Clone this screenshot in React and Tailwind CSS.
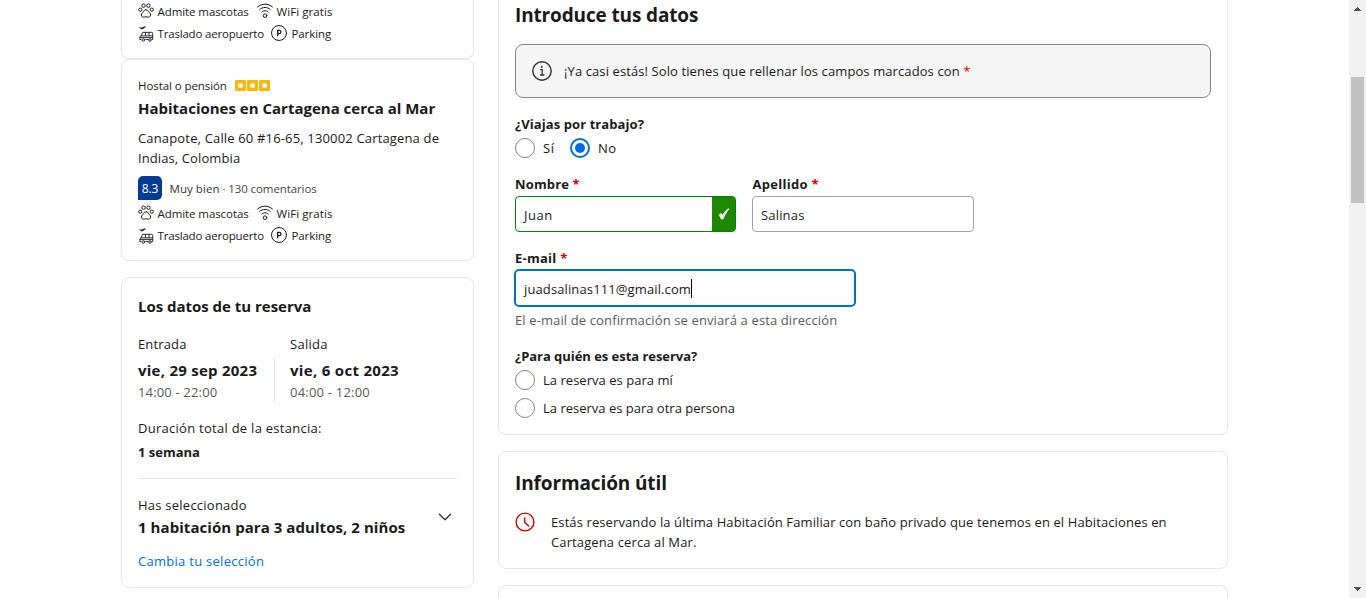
function PawIcon() {
  return (
    <svg viewBox="0 0 24 24" className="h-4 w-4" fill="none" stroke="currentColor" strokeWidth="1.5">
      <circle cx="8.3" cy="4" r="2.6" />
      <circle cx="15.7" cy="4" r="2.6" />
      <circle cx="3.4" cy="10" r="2.4" />
      <circle cx="20.6" cy="10" r="2.4" />
      <path d="M12 10.2c-2.3 0-3.4 1.6-4.2 3.1-.9 1.5-2.7 2.3-2.7 4.700 0 2 1.4 3.300 3.2 3.300 1.500 0 2.300-.7 3.700-.7s2.200.7 3.700.7c1.800 0 3.200-1.300 3.200-3.300 0-2.400-1.800-3.200-2.700-4.700-.8-1.500-1.900-3.100-4.200-3.100z" />
    </svg>
  );
}

function WifiIcon() {
  return (
    <svg viewBox="0 0 24 24" className="h-4 w-4" fill="none" stroke="currentColor" strokeWidth="1.5" strokeLinecap="round">
      <path d="M.8 6C7 .2 17 .2 23.200 6" />
      <path d="M4 9.800c4.400-4.300 11.600-4.300 16 0" />
      <path d="M7.200 13.500c2.700-2.600 6.900-2.600 9.600 0" />
      <circle cx="12" cy="19" r="2.700" />
    </svg>
  );
}

function ShuttleIcon() {
  return (
    <svg viewBox="0 0 24 24" className="h-4 w-4" fill="none" stroke="currentColor" strokeWidth="1.4" strokeLinejoin="round">
      <path d="M2 1.600l2.500 1.400L10 .9l1.500.3-3 2.400-3.700 1.200z" fill="currentColor" strokeWidth="0.5" />
      <path d="M4.800 20.300H2.700v-3.300c0-1.200.8-2 2-2.200l2.200-5.300h13.600c.9 0 1.600.7 1.600 1.600v9.200h-1.800M15.900 20.300h-4.800" />
      <path d="M4.700 14.800h17.400M11.200 9.500v5.300M16.500 9.500v5.300M2.700 17.400h19.400" />
      <circle cx="8" cy="21" r="1.900" />
      <circle cx="18" cy="21" r="1.900" />
    </svg>
  );
}

function ParkingIcon() {
  return (
    <svg viewBox="0 0 24 24" className="h-4 w-4" fill="none" stroke="currentColor">
      <circle cx="12" cy="12" r="11.200" strokeWidth="1.500" />
      <path d="M10 16.800V7.900h2.400a2.500 2.500 0 0 1 0 5H10" strokeWidth="1.900" />
    </svg>
  );
}

function Facilities() {
  return (
    <div className="text-[11.5px] leading-[22px]">
      <div className="flex h-[22px]">
        <span className="mt-[2px] mr-[3.5px]"><PawIcon /></span>
        <span className="w-[99.500px] tracking-[-0.08px]">Admite mascotas</span>
        <span className="mt-[2px] mr-[3.5px]"><WifiIcon /></span>
        <span className="tracking-[0.08px]">WiFi gratis</span>
      </div>
      <div className="flex h-[22px]">
        <span className="mt-[3px] mr-[3.5px]"><ShuttleIcon /></span>
        <span className="w-[113.500px] tracking-[-0.18px]">Traslado aeropuerto</span>
        <span className="mt-[2px] mr-[4.5px]"><ParkingIcon /></span>
        <span className="tracking-[-0.1px]">Parking</span>
      </div>
    </div>
  );
}

function Radio({ checked }) {
  return checked ? (
    <span className="flex h-5 w-5 items-center justify-center rounded-full border-2 border-[#006ce4]">
      <span className="h-[10px] w-[10px] rounded-full bg-[#006ce4]" />
    </span>
  ) : (
    <span className="h-5 w-5 rounded-full border border-[#868686]" />
  );
}

const Req = () => <span className="text-[#c00]">*</span>;

function RatingSquare() {
  return (
    <span className="flex h-[11px] w-[11px] items-center justify-center rounded-[1px] bg-[#ffb700]">
      <span className="h-[5px] w-[5px] rounded-full bg-white" />
    </span>
  );
}

function Sidebar() {
  return (
    <aside className="flex w-[353px] flex-col">
      <section className="h-[59px] rounded-b-lg border border-t-0 border-[#e7e7e7] px-4 pt-[1px]">
        <Facilities />
      </section>

      <section className="h-[202px] rounded-lg border border-[#e7e7e7] px-4 pt-4">
        <div className="flex h-5 items-center">
          <span className="w-[97px] text-[11.5px] tracking-[-0.08px]">Hostal o pensión</span>
          <span className="flex gap-px pb-[2px]">
            <RatingSquare /><RatingSquare /><RatingSquare />
          </span>
        </div>
        <h3 className="text-[15px] leading-6 font-bold">Habitaciones en Cartagena cerca al Mar</h3>
        <p className="mt-2 leading-5 whitespace-nowrap">
          <span className="tracking-[0.16px]">Canapote, Calle 60 #16-65, 130002 Cartagena de</span>
          <br />
          <span className="tracking-[0.1px]">Indias, Colombia</span>
        </p>
        <div className="mt-2 flex h-6 items-center">
          <span className="flex h-6 w-6 items-center justify-center rounded-[5px] rounded-bl-none bg-[#003b95] pt-px text-xs font-medium tracking-[-0.2px] text-white">8.3</span>
          <span className="ml-[7.500px] w-[53px] pt-[2px] text-[11.5px] tracking-[0.05px] text-[#333]">Muy bien</span>
          <span className="pt-[2px] text-[11.5px] tracking-[-0.1px] text-[#474747]">· 130 comentarios</span>
        </div>
        <div className="mt-[3px]"><Facilities /></div>
      </section>

      <section className="mt-4 h-[311px] rounded-lg border border-[#e7e7e7] px-4 pt-4">
        <h3 className="text-[15px] leading-6 font-bold tracking-[-0.02px]">Los datos de tu reserva</h3>
        <div className="mt-4 flex">
          <div className="w-[136px]">
            <div className="leading-5 font-medium tracking-[0.15px]">Entrada</div>
            <div className="mt-1 text-[15px] leading-6 font-bold tracking-[0.25px]">vie, 29 sep 2023</div>
            <div className="leading-5 tracking-[0.16px] text-[#595959]">14:00 - 22:00</div>
          </div>
          <div className="mt-6 h-11 w-px bg-[#e7e7e7]" />
          <div className="ml-[15px]">
            <div className="leading-5 font-medium tracking-[0.28px]">Salida</div>
            <div className="mt-1 text-[15px] leading-6 font-bold tracking-[0.31px]">vie, 6 oct 2023</div>
            <div className="leading-5 tracking-[0.21px] text-[#595959]">04:00 - 12:00</div>
          </div>
        </div>
        <div className="mt-4 leading-5 font-medium tracking-[0.27px]">Duración total de la estancia:</div>
        <div className="mt-1 leading-5 font-bold">1 semana</div>
        <div className="mt-4 flex justify-between border-t border-[#e7e7e7] pt-4">
          <div>
            <div className="leading-5 font-medium tracking-[0.24px]">Has seleccionado</div>
            <div className="text-[15px] leading-6 font-bold tracking-[0.06px]">1 habitación para 3 adultos, 2 niños</div>
          </div>
          <svg viewBox="0 0 14 8" className="mt-[18px] mr-[5px] h-2 w-[14px]" fill="none" stroke="#333" strokeWidth="1.4" strokeLinecap="round" strokeLinejoin="round">
            <path d="M1.400 1.200L7 6.800l5.600-5.600" />
          </svg>
        </div>
        <a className="mt-3 block leading-5 font-medium tracking-[0.28px] text-[#006ce4]">Cambia tu selección</a>
      </section>
    </aside>
  );
}

function DetailsForm() {
  return (
    <section className="h-[435px] rounded-b-lg border border-t-0 border-[#e7e7e7] px-4">
      <h2 className="h-[44px] pt-[1px] text-[19px] leading-7 font-bold tracking-[-0.14px]">Introduce tus datos</h2>
      <div className="flex h-[54px] rounded-lg border border-[#868686] bg-[#f5f5f5] pt-4 pl-4">
        <svg viewBox="0 0 20 20" className="h-5 w-5" fill="none" stroke="#333" strokeWidth="1.400">
          <circle cx="10" cy="10" r="9.200" />
          <path d="M8.300 8.600h1.900v5.100M8 14h4.300" strokeWidth="1.300" />
          <circle cx="9.800" cy="5.700" r="1" fill="#333" stroke="none" />
        </svg>
        <p className="ml-3 leading-5 tracking-[0.1px]">
          ¡Ya casi estás! Solo tienes que rellenar los campos marcados con <Req />
        </p>
      </div>

      <div className="mt-4 leading-5 font-bold tracking-[0.08px]">¿Viajas por trabajo?</div>
      <div className="mt-1 flex h-5 leading-5">
        <Radio />
        <span className="ml-2 w-[27px] tracking-[0.5px]">Sí</span>
        <Radio checked />
        <span className="ml-2 tracking-[0.45px]">No</span>
      </div>

      <div className="mt-4 flex gap-4">
        <div className="w-[221px]">
          <div className="leading-5 font-bold tracking-[0.13px]">Nombre <Req /></div>
          <div className="mt-[2px] flex h-9 items-center rounded border border-[#008009] pl-2">
            <span className="grow pt-[3px] tracking-[0.5px]">Juan</span>
            <span className="flex h-full w-[23px] items-center justify-center bg-[#1e8900]">
              <svg viewBox="0 0 12 12" className="h-3 w-3" fill="white">
                <path d="M.6 7l2.500-1.900c.6.600 1 1.300 1.300 2C6 4.400 7.900 2 10.200.4h1.400C9 3.500 7 6.900 5.600 10.900l-2.500.7C2.500 9.900 1.700 8.300.6 7z" />
              </svg>
            </span>
          </div>
        </div>
        <div className="w-[222px]">
          <div className="pl-[0.5px] leading-5 font-bold tracking-[0.28px]">Apellido <Req /></div>
          <div className="mt-[2px] flex h-9 items-center rounded border border-[#a2a2a2] pt-[3px] pl-2 tracking-[0.17px]">Salinas</div>
        </div>
      </div>

      <div className="mt-4 leading-5 font-bold tracking-[0.25px]">E-mail <Req /></div>
      <div className="mt-px -ml-px flex h-[38px] w-[342px] items-center rounded-[5px] border-2 border-[#0071c2] pt-px pl-2">
        <span className="pt-[2px] tracking-[0.12px]">juadsalinas111@gmail.com</span>
        <span className="h-[19px] w-px bg-black" />
      </div>
      <div className="mt-[3px] leading-5 tracking-[0.12px] text-[#595959]">El e-mail de confirmación se enviará a esta dirección</div>

      <div className="mt-4 leading-5 font-bold tracking-[-0.04px]">¿Para quién es esta reserva?</div>
      <div className="mt-1 flex h-5 gap-2 leading-5 tracking-[0.03px]"><Radio />La reserva es para mí</div>
      <div className="mt-2 flex h-5 gap-2 leading-5"><Radio />La reserva es para otra persona</div>
    </section>
  );
}

function UsefulInfo() {
  return (
    <section className="mt-4 h-[118px] rounded-lg border border-[#e7e7e7] px-4 pt-[17px]">
      <h2 className="text-[19px] leading-7 font-bold tracking-[-0.12px]">Información útil</h2>
      <div className="mt-[15px] flex">
        <svg viewBox="0 0 20 20" className="h-5 w-5" fill="none" stroke="#cc0000" strokeWidth="1.400" strokeLinecap="round" strokeLinejoin="round">
          <circle cx="10" cy="10" r="8.900" />
          <path d="M9.700 6v4.300l4 3.700" />
        </svg>
        <p className="ml-4 leading-5 whitespace-nowrap">
          <span className="tracking-[0.105px]">Estás reservando la última Habitación Familiar con baño privado que tenemos en el Habitaciones en</span>
          <br />
          <span className="tracking-[0.12px]">Cartagena cerca al Mar.</span>
        </p>
      </div>
    </section>
  );
}

function Scrollbar() {
  return (
    <div className="flex h-full w-[17px] flex-col items-center justify-between bg-[#f1f1f1]">
      <svg viewBox="0 0 7 4" className="mt-[7px] h-1 w-[7px]" shapeRendering="crispEdges" fill="#505050"><path d="M0 4L3.500 0 7 4z" /></svg>
      <div className="mt-[66px] mb-auto h-[126px] w-[13px] bg-[#c1c1c1]" />
      <svg viewBox="0 0 7 4" className="mb-[7px] h-1 w-[7px]" shapeRendering="crispEdges" fill="#505050"><path d="M0 0h7L3.500 4z" /></svg>
    </div>
  );
}

export default function App() {
  return (
    <div className="flex h-[598px] w-[1366px] overflow-hidden bg-white font-['Open_Sans','Noto_Sans',sans-serif] text-[13px] text-[#1a1a1a]">
      <main className="flex grow gap-6 pl-[121px]">
        <Sidebar />
        <div className="w-[730px]">
          <DetailsForm />
          <UsefulInfo />
          <section className="mt-4 h-10 rounded-t-lg border border-b-0 border-[#e7e7e7]" />
        </div>
      </main>
      <Scrollbar />
    </div>
  );
}
